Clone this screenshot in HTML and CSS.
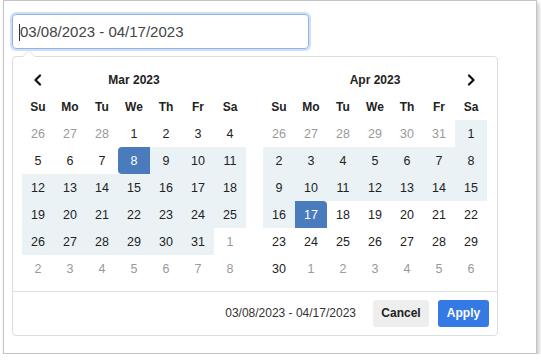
FILE: index.html
```html
<!DOCTYPE html>
<html>
<head>
<meta charset="utf-8">
<link rel="stylesheet" href="styles.css">
</head>
<body>
<div class="frame">
  <div class="field">03/08/2023 - 04/17/2023</div>
  <div class="picker">
    <div class="cals">
      <div class="cal">
        <div class="nav">
          <span class="arrow"><svg width="10" height="12" viewBox="0 0 10 12"><path d="M7 1.5 L2.5 6 L7 10.5" fill="none" stroke="#111" stroke-width="2.2" stroke-linecap="round" stroke-linejoin="round"/></svg></span>
          <span class="title">Mar 2023</span>
          <span class="arrow"></span>
        </div>
        <div class="grid">
          <span class="dn">Su</span><span class="dn">Mo</span><span class="dn">Tu</span><span class="dn">We</span><span class="dn">Th</span><span class="dn">Fr</span><span class="dn">Sa</span>
          <span class="d off">26</span><span class="d off">27</span><span class="d off">28</span><span class="d">1</span><span class="d">2</span><span class="d">3</span><span class="d">4</span>
          <span class="d">5</span><span class="d">6</span><span class="d">7</span><span class="d start">8</span><span class="d in">9</span><span class="d in">10</span><span class="d in">11</span>
          <span class="d in">12</span><span class="d in">13</span><span class="d in">14</span><span class="d in">15</span><span class="d in">16</span><span class="d in">17</span><span class="d in">18</span>
          <span class="d in">19</span><span class="d in">20</span><span class="d in">21</span><span class="d in">22</span><span class="d in">23</span><span class="d in">24</span><span class="d in">25</span>
          <span class="d in">26</span><span class="d in">27</span><span class="d in">28</span><span class="d in">29</span><span class="d in">30</span><span class="d in">31</span><span class="d off">1</span>
          <span class="d off">2</span><span class="d off">3</span><span class="d off">4</span><span class="d off">5</span><span class="d off">6</span><span class="d off">7</span><span class="d off">8</span>
        </div>
      </div>
      <div class="cal">
        <div class="nav">
          <span class="arrow"></span>
          <span class="title">Apr 2023</span>
          <span class="arrow"><svg width="10" height="12" viewBox="0 0 10 12"><path d="M3 1.5 L7.5 6 L3 10.5" fill="none" stroke="#111" stroke-width="2.2" stroke-linecap="round" stroke-linejoin="round"/></svg></span>
        </div>
        <div class="grid">
          <span class="dn">Su</span><span class="dn">Mo</span><span class="dn">Tu</span><span class="dn">We</span><span class="dn">Th</span><span class="dn">Fr</span><span class="dn">Sa</span>
          <span class="d off">26</span><span class="d off">27</span><span class="d off">28</span><span class="d off">29</span><span class="d off">30</span><span class="d off">31</span><span class="d in">1</span>
          <span class="d in">2</span><span class="d in">3</span><span class="d in">4</span><span class="d in">5</span><span class="d in">6</span><span class="d in">7</span><span class="d in">8</span>
          <span class="d in">9</span><span class="d in">10</span><span class="d in">11</span><span class="d in">12</span><span class="d in">13</span><span class="d in">14</span><span class="d in">15</span>
          <span class="d in">16</span><span class="d end">17</span><span class="d">18</span><span class="d">19</span><span class="d">20</span><span class="d">21</span><span class="d">22</span>
          <span class="d">23</span><span class="d">24</span><span class="d">25</span><span class="d">26</span><span class="d">27</span><span class="d">28</span><span class="d">29</span>
          <span class="d">30</span><span class="d off">1</span><span class="d off">2</span><span class="d off">3</span><span class="d off">4</span><span class="d off">5</span><span class="d off">6</span>
        </div>
      </div>
    </div>
    <div class="footer">
      <span class="range">03/08/2023 - 04/17/2023</span>
      <button class="btn cancel">Cancel</button>
      <button class="btn apply">Apply</button>
    </div>
  </div>
</div>
</body>
</html>
```
FILE: styles.css
```css
* { box-sizing: border-box; }
html, body { margin: 0; padding: 0; background: #fff; }
body { font-family: "Liberation Sans", Arial, sans-serif; color: #222; }

.frame {
  margin-left: 3px;
  width: 534px;
  height: 354px;
  border: 1px solid #c4c4c4;
  background: #fff;
  box-shadow: 2px 3px 4px rgba(0,0,0,0.22);
  padding: 13px 0 0 8px;
}

.field {
  width: 297px;
  height: 35px;
  border: 1px solid #8fb4ea;
  border-radius: 4px;
  box-shadow: 0 0 0 2px rgba(120,160,230,0.35);
  padding: 0 0 0 7px;
  font-size: 15px;
  line-height: 33px;
  color: #444;
  position: relative;
}
.field::before {
  content: "";
  position: absolute;
  left: 6px;
  top: 9px;
  width: 1px;
  height: 17px;
  background: #333;
}

.picker {
  position: relative;
  margin-top: 7px;
  width: 486px;
  border: 1px solid #ddd;
  border-radius: 4px;
  background: #fff;
}
.picker::before {
  content: "";
  position: absolute;
  left: 9px;
  top: -7px;
  border-left: 7px solid transparent;
  border-right: 7px solid transparent;
  border-bottom: 7px solid #ddd;
}
.picker::after {
  content: "";
  position: absolute;
  left: 10px;
  top: -6px;
  border-left: 6px solid transparent;
  border-right: 6px solid transparent;
  border-bottom: 6px solid #fff;
}

.cals {
  display: flex;
  gap: 17px;
  padding: 9px 9px 9px 9px;
}

.cal { width: 224px; }

.nav {
  display: grid;
  grid-template-columns: 32px 160px 32px;
  height: 27px;
  align-items: center;
}
.arrow { display: flex; justify-content: center; align-items: center; }
.title { text-align: center; font-weight: bold; font-size: 12px; }

.grid {
  display: grid;
  grid-template-columns: repeat(7, 32px);
  grid-auto-rows: 27px;
}
.dn, .d {
  display: flex;
  align-items: center;
  justify-content: center;
  font-size: 12.5px;
}
.dn { font-weight: bold; font-size: 12px; }
.d.off { color: #999; }
.d.in { background: #ebf2f6; }
.d.start, .d.end { background: #4a7bbd; color: #fff; }
.d.start { border-radius: 4px 0 0 4px; }
.d.end { border-radius: 0 4px 0 0; }

.footer {
  border-top: 1px solid #ddd;
  display: flex;
  justify-content: flex-end;
  align-items: center;
  padding: 0 8px 1px 8px;
  height: 44px;
}
.range { font-size: 12px; color: #333; margin-right: 17px; }
.btn {
  font-family: "Liberation Sans", Arial, sans-serif;
  font-weight: bold;
  font-size: 12px;
  height: 27px;
  border: none;
  border-radius: 3px;
  padding: 0;
}
.cancel { width: 56px; background: #eee; color: #222; margin-right: 9px; }
.apply { width: 51px; background: #3579e4; color: #fff; }
```
